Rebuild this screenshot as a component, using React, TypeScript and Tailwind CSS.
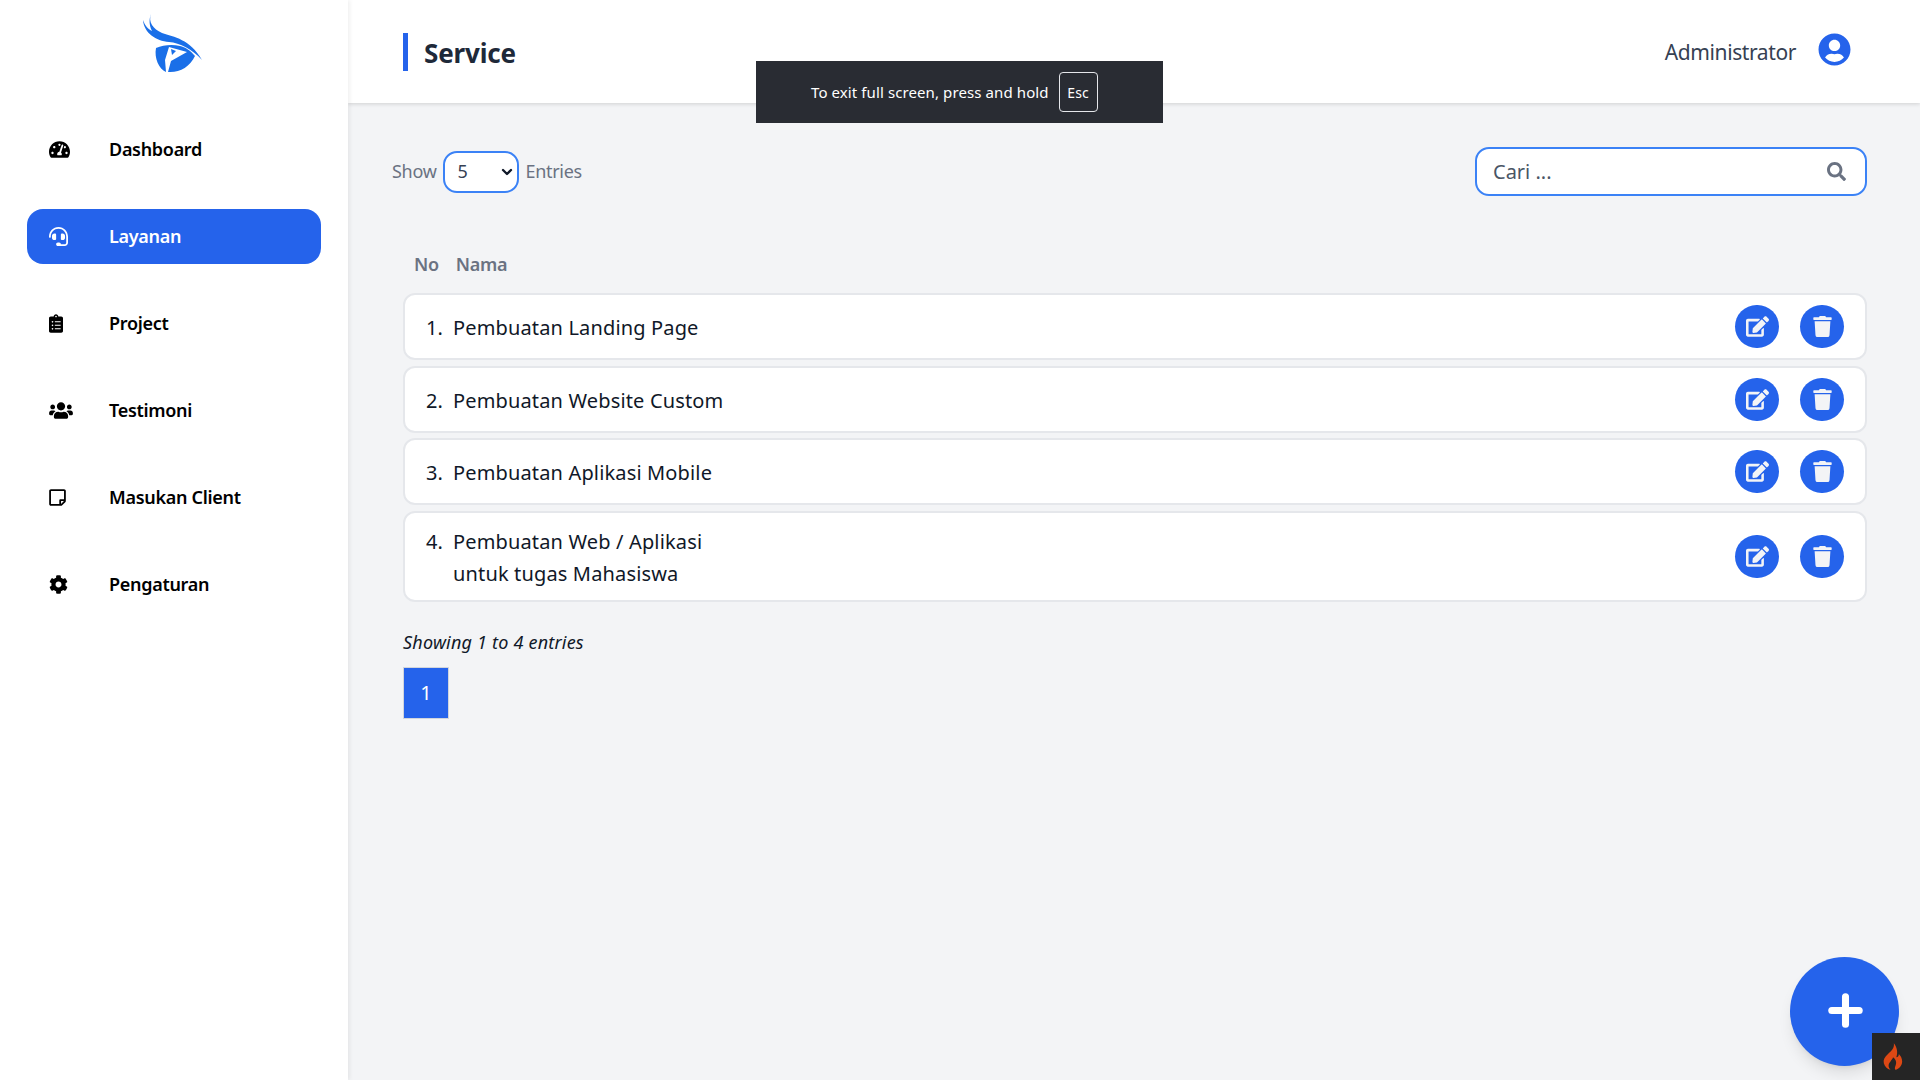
import React from "react";
import { ChevronDown, Plus } from "lucide-react";
import {
  FaClipboardList,
  FaCog,
  FaEdit,
  FaHeadset,
  FaRegStickyNote,
  FaSearch,
  FaTachometerAlt,
  FaTrash,
  FaUserCircle,
  FaUsers,
} from "react-icons/fa";

const NAV_ITEMS = [
  { label: "Dashboard", icon: FaTachometerAlt, iconClass: "h-[19px] w-[21px]" },
  { label: "Layanan", icon: FaHeadset, iconClass: "h-[19px] w-[19px]", active: true },
  { label: "Project", icon: FaClipboardList, iconClass: "h-[19px] w-[14px]" },
  { label: "Testimoni", icon: FaUsers, iconClass: "h-[19px] w-[24px]" },
  { label: "Masukan Client", icon: FaRegStickyNote, iconClass: "h-[19px] w-[17px]" },
  { label: "Pengaturan", icon: FaCog, iconClass: "h-[19px] w-[19px]" },
];

const SERVICES = [
  { no: 1, lines: ["Pembuatan Landing Page"] },
  { no: 2, lines: ["Pembuatan Website Custom"] },
  { no: 3, lines: ["Pembuatan Aplikasi Mobile"] },
  { no: 4, lines: ["Pembuatan Web / Aplikasi", "untuk tugas Mahasiswa"] },
];

const Logo = () => (
  <svg viewBox="0 0 60 60" className="h-[60px] w-[60px]">
    <path
      d="M9 0C6 8 11 15 20 19C32 23 48 25 60 46C50 35 38 29 27 28C14 27 2 19 1 6C3 12 6 15 10 17C7 11 7 5 9 0Z"
      fill="#1a6fe8"
    />
    <path
      d="M14 34C21 31 30 30 38 32C43 33 48 36 53 42C48 53 37 59 26 58L29 47L45 38L27 33L23 46L24 58C17 55 12 44 14 34Z"
      fill="#1a6fe8"
    />
    <path d="M29 35L34 37L30 41Z" fill="#1a6fe8" />
  </svg>
);

const Flame = () => (
  <svg viewBox="0 0 24 32" className="h-[27px] w-[20px]">
    <path
      d="M13 0C14 6 10 9 6 13C2 17 0 20 1 24C2 28 5 31 9 32C6 29 6 25 9 22C10 20 12 19 12 17C15 19 17 23 15 27C14 29 14 31 15 32C19 31 23 27 23 22C23 18 21 15 19 13C19 15 18 17 16 17C18 11 17 5 13 0Z"
      fill="#dd4814"
    />
  </svg>
);

const Sidebar = () => (
  <aside className="z-10 flex h-screen w-[348px] shrink-0 flex-col bg-white shadow-[2px_0_4px_rgba(0,0,0,0.06)]">
    <div className="flex h-[88px] pl-[142px] pt-[14px]">
      <Logo />
    </div>
    <nav className="flex flex-col gap-[32px] px-[27px] pt-[34px]">
      {NAV_ITEMS.map(({ label, icon: Icon, iconClass, active }) => (
        <a
          key={label}
          className={`flex h-[55px] items-center rounded-2xl pl-[22px] text-[18px] font-semibold tracking-[-0.3px] ${
            active ? "bg-[#2563eb] text-white" : "text-black"
          }`}
        >
          <span className="flex w-[60px] items-center">
            <Icon className={iconClass} />
          </span>
          {label}
        </a>
      ))}
    </nav>
  </aside>
);

const Header = () => (
  <header className="flex h-[103px] shrink-0 items-center justify-between bg-white pl-[55px] pr-[69px] shadow-[0_1px_4px_rgba(0,0,0,0.15)]">
    <h1 className="border-l-[5px] border-[#2563eb] pl-4 pt-[2px] text-[26px] font-bold leading-[36px] tracking-[-0.15px] text-gray-800">
      Service
    </h1>
    <div className="flex items-center gap-[22px]">
      <span className="pt-[2px] text-[21px] tracking-[-0.4px] text-gray-700">Administrator</span>
      <FaUserCircle className="-mt-1 text-[33px] text-[#2563eb]" />
    </div>
  </header>
);

const ServiceRow = ({ no, lines }: { no: number; lines: string[] }) => (
  <div className="flex items-center justify-between rounded-xl border-2 border-gray-200 bg-white py-[10px] pl-[21px] pr-[21px]">
    <div className="flex pt-[3px] text-[20px] leading-8 tracking-[0.15px] text-gray-900">
      <span className="w-[27px]">{no}.</span>
      <div>
        {lines.map((line) => (
          <div key={line}>{line}</div>
        ))}
      </div>
    </div>
    <div className="flex gap-[21px]">
      <button className="flex h-[43px] w-11 items-center justify-center rounded-full bg-[#2563eb] text-[23px] text-gray-100">
        <FaEdit />
      </button>
      <button className="flex h-[43px] w-11 items-center justify-center rounded-full bg-[#2563eb] text-[21px] text-gray-100">
        <FaTrash />
      </button>
    </div>
  </div>
);

export default function App() {
  return (
    <div
      className="relative flex h-screen overflow-hidden bg-gray-100"
      style={{ fontFamily: '"Noto Sans", "Open Sans", sans-serif' }}
    >
      <Sidebar />
      <main className="flex min-w-0 flex-1 flex-col">
        <Header />
        <div className="flex flex-col pl-[55px] pr-[53px]">
          <div className="-ml-[11px] mt-[44px] flex items-center justify-between">
            <div className="flex items-center gap-[6px] text-[18px] tracking-[-0.3px] text-gray-500">
              Show
              <div className="relative ml-px">
                <select
                  defaultValue="5"
                  className="block h-[42px] w-[76px] appearance-none rounded-[14px] border-2 border-[#3b82f6] bg-white pl-[12px] text-[18px] text-gray-700"
                >
                  <option value="5">5</option>
                  <option value="10">10</option>
                  <option value="25">25</option>
                </select>
                <ChevronDown
                  size={16}
                  strokeWidth={3.5}
                  className="pointer-events-none absolute right-[4px] top-[13px] text-gray-900"
                />
              </div>
              Entries
            </div>
            <div className="relative">
              <input
                placeholder="Cari ..."
                className="block h-[49px] w-[392px] rounded-[14px] border-2 border-[#3b82f6] bg-white pl-[16px] pr-12 text-[20px] placeholder:text-gray-600"
              />
              <FaSearch className="absolute right-[21px] top-[15px] text-[19px] text-gray-500" />
            </div>
          </div>

          <div className="mt-[54px] flex gap-[17px] pl-[11px] text-[18px] font-semibold leading-7 tracking-[-0.3px] text-gray-500">
            <span>No</span>
            <span>Nama</span>
          </div>

          <div className="mt-[15px] flex flex-col gap-[5.5px]">
            {SERVICES.map((service) => (
              <ServiceRow key={service.no} {...service} />
            ))}
          </div>

          <p className="mt-[26px] text-[18px] italic leading-7 tracking-[0.2px] text-gray-900">
            Showing 1 to 4 entries
          </p>
          <div className="mt-[11px]">
            <span className="flex h-[52px] w-[46px] items-center justify-center border border-gray-300 bg-[#2563eb] text-[20px] text-white">
              1
            </span>
          </div>
        </div>
      </main>

      <div className="absolute left-[756px] top-[61px] z-20 flex h-[62px] w-[407px] items-center bg-[#292c33] pl-[55px] text-[15px] tracking-[0.1px] text-white">
        To exit full screen, press and hold
        <span className="ml-[10px] flex h-[40px] w-[39px] items-center justify-center rounded-sm border border-gray-200 text-[14px]">
          Esc
        </span>
      </div>

      <button className="absolute left-[1790px] top-[957px] z-20 flex h-[109px] w-[109px] items-center justify-center rounded-full bg-[#2563eb] pb-[3px] pl-[1px] text-white shadow-lg">
        <Plus size={47} strokeWidth={3.6} />
      </button>

      <div className="absolute bottom-0 right-0 z-30 flex h-[47px] w-[48px] items-center justify-center bg-[#252525] pr-[6px]">
        <Flame />
      </div>
    </div>
  );
}
